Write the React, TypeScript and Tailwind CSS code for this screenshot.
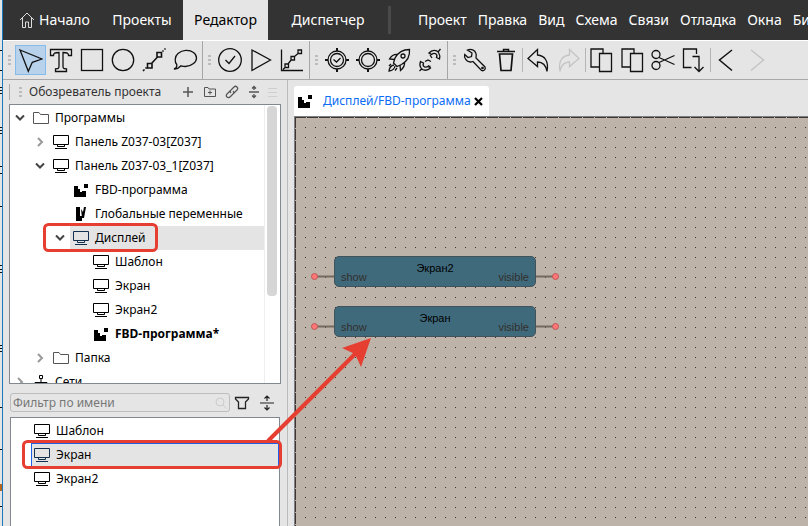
import type { ReactNode } from "react";

type IconName = "folder" | "display" | "fbd" | "vars" | "net";

interface TreeNode {
  id: string;
  label: string;
  icon: IconName;
  level: number;
  state?: "open" | "closed";
  selected?: boolean;
  bold?: boolean;
}

const treeNodes: TreeNode[] = [
  { id: "programs", label: "Программы", icon: "folder", level: 0, state: "open" },
  { id: "panel-03", label: "Панель Z037-03[Z037]", icon: "display", level: 1, state: "closed" },
  { id: "panel-03-1", label: "Панель Z037-03_1[Z037]", icon: "display", level: 1, state: "open" },
  { id: "fbd", label: "FBD-программа", icon: "fbd", level: 2 },
  { id: "globals", label: "Глобальные переменные", icon: "vars", level: 2 },
  { id: "display", label: "Дисплей", icon: "display", level: 2, state: "open", selected: true },
  { id: "template", label: "Шаблон", icon: "display", level: 3 },
  { id: "screen", label: "Экран", icon: "display", level: 3 },
  { id: "screen2", label: "Экран2", icon: "display", level: 3 },
  { id: "fbd-edited", label: "FBD-программа*", icon: "fbd", level: 3, bold: true },
  { id: "folder", label: "Папка", icon: "folder", level: 1, state: "closed" },
  { id: "nets", label: "Сети", icon: "net", level: 0, state: "closed" },
];

const indents = ["pl-0", "pl-5", "pl-10", "pl-15"];

const menuItems = ["Проект", "Правка", "Вид", "Схема", "Связи", "Отладка", "Окна", "Библиотека"];

const blocks = [
  { id: "b2", label: "Экран2", place: "left-[15px] top-[139px]" },
  { id: "b1", label: "Экран", place: "left-[15px] top-[189px]" },
];

function ItemIcon({ name, active }: { name: IconName; active?: boolean }) {
  const color = active ? "text-[#14304f]" : "text-black";
  return (
    <svg className={`h-4 w-4 shrink-0 ${color}`} viewBox="0 0 16 16" fill="none" stroke="currentColor">
      {name === "folder" && <path stroke="#555" d="M.5 13.5V2.5H6l1.5 2h8v9z" />}
      {name === "display" && <path d="M.5 1.500h15v9h-15zM4.500 10.500v2h7v-2M2 14.500h12" />}
      {name === "fbd" && (
        <path stroke="none" fill="currentColor" d="M1 4h4v3h2v3h2V9h4v6H1zM11 2h4v4h-4z" />
      )}
      {name === "vars" && (
        <path stroke="none" fill="currentColor" d="M3 1h4v9h2v5H3zM8 3l2 3 1-5h2l-2 11H9z" />
      )}
      {name === "net" && (
        <path d="M8 4v6M2 14V8.500h12V14M8 10v5M6.500 1.500h3v3h-3z" />
      )}
    </svg>
  );
}

function Chevron({ state }: { state?: "open" | "closed" }) {
  return (
    <svg className="h-3 w-3 shrink-0" viewBox="0 0 12 12" fill="none" strokeWidth="2">
      {state === "open" && <path stroke="#444" d="M2 3.500l4 4 4-4" />}
      {state === "closed" && <path stroke="#999" d="M4 2l4 4-4 4" />}
    </svg>
  );
}

function Grip() {
  return (
    <svg className="h-[10px] w-3 shrink-0" viewBox="0 0 12 10" fill="#bcbcbc">
      <path d="M5 0h3v2H5zM5 4h3v2H5zM5 8h3v2H5z" />
    </svg>
  );
}

interface ToolProps {
  label: string;
  active?: boolean;
  disabled?: boolean;
  children: ReactNode;
}

function Tool({ label, active, disabled, children }: ToolProps) {
  return (
    <button
      type="button"
      aria-label={label}
      aria-pressed={active}
      disabled={disabled}
      className={`flex h-[30px] w-[31px] shrink-0 items-center justify-center border ${
        active ? "border-[#84bdec] bg-[#b7d2ea]" : "border-transparent"
      } ${disabled ? "text-[#c4c4c4]" : "text-[#111]"}`}
    >
      <svg
        className="h-[26px] w-[25px] shrink-0"
        viewBox="0 0 25 26"
        fill="none"
        stroke="currentColor"
        strokeWidth="1.300"
      >
        {children}
      </svg>
    </button>
  );
}

function ToolGroup({ children }: { children: ReactNode }) {
  return (
    <div className="flex shrink-0 items-center border-r border-[#a6a6a6] pr-px">
      <Grip />
      {children}
    </div>
  );
}

function Divider() {
  return <span className="h-6 w-px shrink-0 bg-[#b5b5b5]" />;
}

function Toolbar() {
  return (
    <div className="flex h-10 border-t border-b border-t-white border-b-[#a8a8a8]">
      <ToolGroup>
        <Tool label="Выбор" active>
          <path d="M2 3l22 9-9.700 3.300-4 9z" />
        </Tool>
        <Tool label="Текст">
          <path d="M1.500 8.500v-6h21v6h-3c0-2.500-1-3-5.500-3V19c0 2.500.5 2.500 3.500 2.800v2.700H6.500v-2.700C9.500 21.500 10 21.500 10 19V5.500c-4.500 0-5.500.5-5.500 3z" />
        </Tool>
        <Tool label="Прямоугольник">
          <rect x="1.500" y="2.500" width="21" height="21" />
        </Tool>
        <Tool label="Эллипс">
          <circle cx="12" cy="13" r="10.700" />
        </Tool>
        <Tool label="Связь">
          <path strokeWidth="1.600" d="M5.500 16.500H10V21H5.500zM15 5.500h4.500V10H15zM9.500 16.500L15.500 10M1 24l1.500-1.500M3.500 21.500l1-1M20.500 4.500l1-1M22.500 2.500L23.500 1.500" />
        </Tool>
        <Tool label="Комментарий">
          <path d="M1 22c2-.5 3-2 2.800-4.500C1.500 15 1.500 9.500 5 6.500c4.500-4 11.500-4 15.500-1 4 3 4 8 0 11-3.500 2.800-8.500 3.500-12.500 2.300C6 21 3.500 22.300 1 22z" />
        </Tool>
      </ToolGroup>
      <ToolGroup>
        <Tool label="Проверить">
          <circle cx="12" cy="13" r="11.300" />
          <path d="M7.500 13l3.500 3.500 6-7.500" />
        </Tool>
        <Tool label="Запуск">
          <path d="M3 3v20.500L21.500 13z" />
        </Tool>
        <Tool label="График">
          <path d="M1.500 2.500v21h21.500M3 22.500l2.500-2.500M8 17l3.500-4.500M14.500 9.500l3.500-3M5 17h3.500v3.500H5zM11 9.500h3.500V13H11zM18 3h3.500v3.500H18z" />
        </Tool>
      </ToolGroup>
      <ToolGroup>
        <Tool label="Подключить и проверить">
          <circle cx="12" cy="13" r="9" />
          <circle cx="12" cy="13" r="6.500" />
          <path d="M8.500 12.500l3 2.500 4-4" />
          <path strokeWidth="2" d="M12 1v3M12 22v3M0 13h3M21 13h3" />
        </Tool>
        <Tool label="Подключить">
          <circle cx="12" cy="13" r="9" />
          <circle cx="12" cy="13" r="6.500" />
          <path strokeWidth="2" d="M12 1v3M12 22v3M0 13h3M21 13h3" />
        </Tool>
        <Tool label="Загрузить">
          <path d="M22.500 2.500C16 2.500 11 5.500 8 11l-1.500 5 3.500 3.500 4.500-2C20 14.500 23 9 22.500 2.500zM11 7.500c-4-.5-6.500 1-8.500 4.500l5 .5M17.500 15c.5 3.500-1 6-4 8.500l-.5-5.500M7 18c-3 .5-4.500 2-5 6 3.500-.5 5.500-2 6-5M4 17l-2 2M10 21l-2 2.500" />
          <circle cx="16" cy="9" r="2" />
        </Tool>
        <Tool label="Обновить связь">
          <path d="M2.500 14.500l3 1.500c-1.500 3.500 2 5.500 5 3l2 2c-3 3-7.500 3-9.500 0-1.300-2-1.300-4.500-.5-6.500zM4 21.500L1.500 24M10 20l2.500-1M21.500 12l-3-1.500c1.500-3.500-2-5.500-5-3l-2.500-1.500c3-3.500 7.500-3.500 9.500-.5 1.300 2 1.500 4.500 1 6.500zM20 5l2.500-3M12 8l2 3M7 14.500l3-1.500 3 1.500" />
        </Tool>
      </ToolGroup>
      <div className="flex shrink-0 items-center">
        <Grip />
        <Tool label="Настройки">
          <path d="M4.500 3C8 1.500 12 3 13 6.500c.5 1.500 0 3 0 4.500l9 9c1 2-1 4.500-3.500 3.500L10 14.500c-3 1-6 0-7.500-2.500-1-1.500-1.200-3-.8-4.500L5 10.500l3.500-1L9 6z" />
          <circle cx="19.500" cy="21" r=".7" />
        </Tool>
        <Tool label="Удалить">
          <path strokeWidth="1.500" d="M3 4.500h18M9.500 4V2.500h5V4" />
          <path strokeWidth="1.700" d="M5.500 7l1.500 16.500h10L18.500 7z" />
        </Tool>
        <Divider />
        <Tool label="Отменить">
          <path d="M11.500 2.500L2 11.500l9.500 8V15c5 0 8.500 3.500 9.500 9.500C23 14 18.500 8.500 11.500 8z" />
        </Tool>
        <Tool label="Повторить" disabled>
          <path d="M12.500 2.500l9.500 9-9.500 8V15c-5 0-8.500 3.500-9.500 9.500C1 14 5.500 8.500 12.500 8z" />
        </Tool>
        <Divider />
        <Tool label="Копировать">
          <path d="M10 20H2V2h12v4M10.500 6.500h12v18h-12z" />
        </Tool>
        <Tool label="Дублировать">
          <path d="M10 20H2V2h12v4M10.500 6.500h12v18h-12z" />
        </Tool>
        <Tool label="Вырезать">
          <circle cx="5" cy="7.500" r="4" />
          <circle cx="5" cy="18.500" r="4" />
          <path d="M8 10.500l15.500 7M8 15.500l15.500-7" />
        </Tool>
        <Tool label="Вставить">
          <path d="M14.500 7V2h-13v18.500h8M10.500 9.500H17V24M12.500 20l4.500 4.500 4.500-4.500" />
        </Tool>
        <Divider />
        <Tool label="Назад">
          <path strokeWidth="1.500" d="M18 3L5.500 13 18 23.500" />
        </Tool>
        <Tool label="Вперёд" disabled>
          <path strokeWidth="1.500" d="M6 3l12.500 10L6 23.500" />
        </Tool>
      </div>
    </div>
  );
}

function Header() {
  return (
    <header className="flex h-10 items-stretch overflow-hidden bg-[#333] text-sm whitespace-nowrap text-white">
      <button type="button" className="flex w-[98px] shrink-0 items-center gap-1 pl-4">
        <svg className="h-4 w-4" viewBox="0 0 16 16" fill="none" stroke="#ddd">
          <path d="M1 8l7-7 7 7M3.500 6v9.500H6.500V10h3v5.500h3V6" />
        </svg>
        Начало
      </button>
      <button type="button" className="w-[82px] shrink-0">Проекты</button>
      <button type="button" className="w-[85px] shrink-0 bg-[#e5e5e5] text-black">Редактор</button>
      <button type="button" className="w-[120px] shrink-0">Диспетчер</button>
      <span className="my-1.5 w-[3px] shrink-0 bg-[#4a4a4a]" />
      <nav className="flex items-center gap-[11px] pl-[27px]">
        {menuItems.map((item) => (
          <button key={item} type="button" className="shrink-0">
            {item}
          </button>
        ))}
      </nav>
    </header>
  );
}

function ProjectTree() {
  return (
    <div className="mx-[6px] flex h-[280px] shrink-0 overflow-hidden border border-[#828790] bg-white">
      <ul role="tree" aria-label="Обозреватель проекта" className="min-w-0 flex-1 pt-px text-xs text-black">
        {treeNodes.map((node) => (
          <li key={node.id} role="treeitem" aria-selected={!!node.selected} className={`flex h-6 items-stretch ${indents[node.level]}`}>
            <span className="flex w-[20px] shrink-0 items-center pl-1">
              <Chevron state={node.state} />
            </span>
            <span
              className={`flex flex-1 items-center gap-[6px] pl-[3px] whitespace-nowrap ${
                node.selected ? "bg-[#e4e4e4]" : ""
              } ${node.bold ? "font-bold" : ""}`}
            >
              <ItemIcon name={node.icon} active={node.selected} />
              {node.label}
            </span>
          </li>
        ))}
      </ul>
      <div className="w-4 shrink-0 border-l border-[#eee] pt-px pl-[2px]">
        <div className="h-[190px] w-[10px] rounded-[4px] bg-[#d6d6d6]" />
      </div>
    </div>
  );
}

function FilterBar() {
  return (
    <div className="flex h-[33px] shrink-0 items-center pt-1 pl-[7px]">
      <label className="flex h-[19px] w-[220px] items-center rounded-[3px] border border-[#bdbdbd] px-[2px]">
        <input
          type="text"
          aria-label="Фильтр по имени"
          placeholder="Фильтр по имени"
          className="min-w-0 flex-1 bg-transparent text-xs outline-none placeholder:text-[#777]"
        />
        <svg className="h-3 w-3" viewBox="0 0 12 12" fill="none" stroke="#ccc">
          <path d="M9 5a4 4 0 1 1-8 0 4 4 0 0 1 8 0M8 8l3.500 3.500" />
        </svg>
      </label>
      <button type="button" aria-label="Фильтр" className="ml-1">
        <svg className="h-4 w-4" viewBox="0 0 16 16" fill="none" stroke="#222" strokeWidth="1.300">
          <path d="M1.500 2.500h13v1.500L11.500 7v6.500h-7V7l-3-3z" />
        </svg>
      </button>
      <button type="button" aria-label="Свернуть все" className="ml-[9px]">
        <svg className="h-4 w-4" viewBox="0 0 16 16" fill="none" stroke="#222" strokeWidth="1.200">
          <path d="M1 8h14M8 1v5M5.500 3.500L8 1l2.500 2.500M8 10v5M5.500 12.500L8 15l2.500-2.500" />
        </svg>
      </button>
    </div>
  );
}

function ItemList() {
  const items = ["Шаблон", "Экран", "Экран2"];
  return (
    <ul role="listbox" aria-label="Элементы" className="mx-[7px] min-h-0 flex-1 border border-b-0 border-[#828790] bg-white pt-px pl-[20px] text-xs text-black">
      {items.map((item) => {
        const selected = item === "Экран";
        return (
          <li
            key={item}
            role="option"
            aria-selected={selected}
            className={`flex h-6 items-center gap-[6px] border pl-[2px] ${
              selected ? "border-[#1f5fe8] bg-[#e4e4e4]" : "border-transparent"
            }`}
          >
            <ItemIcon name="display" active={selected} />
            {item}
          </li>
        );
      })}
    </ul>
  );
}

function Explorer() {
  return (
    <aside className="flex w-[285px] shrink-0 flex-col border-r border-[#bbb]">
      <div className="flex h-6 shrink-0 items-center pl-[6px] text-xs text-[#333]">
        <span className="h-4 w-px bg-[#aaa]" />
        <span className="ml-1 flex">
          <Grip />
        </span>
        <h2 className="ml-[3px] w-[152px] whitespace-nowrap">Обозреватель проекта</h2>
        <div className="flex gap-2 text-[#555]">
          <button type="button" aria-label="Добавить">
            <svg className="h-[14px] w-[14px]" viewBox="0 0 14 14" stroke="currentColor" strokeWidth="1.500">
              <path d="M7 2v10M2 7h10" />
            </svg>
          </button>
          <button type="button" aria-label="Новая папка">
            <svg className="h-[14px] w-[14px]" viewBox="0 0 14 14" fill="none" stroke="currentColor">
              <path d="M1.500 11.500v-9H5l1 1.500h6.500v7.500zM7 5.500v4M5 7.500h4" />
            </svg>
          </button>
          <button type="button" aria-label="Связать">
            <svg className="h-[14px] w-[14px]" viewBox="0 0 14 14" fill="none" stroke="currentColor" strokeWidth="1.200">
              <path d="M5.500 5.500l-3.500 3.500a2 2 0 0 0 3 3L8 9a2 2 0 0 0 0-3M8.500 8.500L12 5a2 2 0 0 0-3-3L6 5a2 2 0 0 0 0 3" />
            </svg>
          </button>
          <button type="button" aria-label="Свернуть">
            <svg className="h-[14px] w-[14px]" viewBox="0 0 14 14" fill="none" stroke="currentColor" strokeWidth="1.300">
              <path d="M2 7h10M7 1v4M5 3.500L7 1.500l2 2M7 9v4M5 10.500l2 2 2-2" />
            </svg>
          </button>
          <button type="button" aria-label="Меню" className="-ml-1">
            <svg className="h-[14px] w-[14px]" viewBox="0 0 14 14" stroke="#cfcfcf">
              <path d="M3 3.500h9M3 7.500h9M3 11.500h9" />
            </svg>
          </button>
        </div>
      </div>
      <ProjectTree />
      <FilterBar />
      <ItemList />
    </aside>
  );
}

function Block({ label, place }: { label: string; place: string }) {
  return (
    <div className={`absolute flex h-[31px] items-center ${place}`}>
      <svg className="mt-[10px] h-[9px] w-6" viewBox="0 0 24 9" fill="#f77">
        <path d="M7 4.500h17" stroke="#75685e" strokeWidth="2" />
        <circle cx="4.500" cy="4.500" r="3" stroke="#b55" />
      </svg>
      <div className="flex h-[31px] w-[202px] flex-col rounded-[5px] border border-[#42535b] bg-[#3f6a7c] px-[6px] pt-[5px] text-[11px] leading-[13px]">
        <div className="text-center text-black">{label}</div>
        <div className="-mt-1 flex justify-between text-[#332f2c]">
          <span>show</span>
          <span>visible</span>
        </div>
      </div>
      <svg className="mt-[10px] h-[9px] w-6" viewBox="0 0 24 9" fill="#f77">
        <path d="M0 4.500h17" stroke="#75685e" strokeWidth="2" />
        <circle cx="19.500" cy="4.500" r="3" stroke="#b55" />
      </svg>
    </div>
  );
}

function Editor() {
  return (
    <main className="flex min-w-0 flex-1 flex-col pl-[6px]">
      <div className="flex h-9 shrink-0 items-end">
        <div className="flex h-[30px] items-center rounded-t-[3px] bg-white pl-[3px] text-xs text-[#0a6cf5]">
          <ItemIcon name="fbd" />
          <a href="#program" className="ml-[10px] w-[141px] whitespace-nowrap">Дисплей/FBD-программа</a>
          <button type="button" aria-label="Закрыть" className="ml-[9px] pr-[5px]">
            <svg className="h-[11px] w-[11px]" viewBox="0 0 11 11" stroke="#000" strokeWidth="2.200">
              <path d="M2 2l7 7M9 2l-7 7" />
            </svg>
          </button>
        </div>
      </div>
      <div className="relative min-h-0 flex-1 overflow-hidden border-t border-l border-[#7b7f88] bg-[#bdb3a8] font-['Liberation_Sans',sans-serif]">
        <svg className="absolute h-full w-full" shapeRendering="crispEdges">
          <defs>
            <pattern id="grid" width="10" height="10" patternUnits="userSpaceOnUse">
              <rect width="1" height="1" fill="#3d302b" />
            </pattern>
          </defs>
          <rect x="10" y="10" width="100%" height="100%" fill="url(#grid)" />
          <line x1="0" y1="0.500" x2="100%" y2="0.500" stroke="#44342f" strokeDasharray="11 1" />
          <line x1="0.500" y1="0" x2="0.500" y2="100%" stroke="#44342f" strokeDasharray="11 1" />
        </svg>
        {blocks.map((block) => (
          <Block key={block.id} label={block.label} place={block.place} />
        ))}
      </div>
    </main>
  );
}

// Red callouts that tie the list item to its block on the canvas
function Callouts() {
  return (
    <svg className="pointer-events-none absolute top-0 left-0 h-[526px] w-[400px]" fill="none" stroke="#e63e31" strokeWidth="3">
      <rect x="44.500" y="224.500" width="112" height="26" rx="4" />
      <rect x="23.500" y="441.500" width="257" height="26" rx="4" />
      <path strokeWidth="4" d="M268 441l88-88" />
      <path stroke="none" fill="#e63e31" d="M371 338l-29 10 13 6 6 13z" />
    </svg>
  );
}

// Sliver of the window lying behind the application
function BackWindow() {
  const lines = [50, 70, 87, 90, 93, 127, 130, 133, 166, 173, 206, 265, 269, 272, 345, 348, 351, 407, 449, 506];
  return (
    <svg className="h-full w-[2px] shrink-0" fill="#111" shapeRendering="crispEdges">
      {lines.map((y) => (
        <rect key={y} y={y} width="2" height="1" />
      ))}
      <rect y="484" width="2" height="7" fill="#b5651d" />
    </svg>
  );
}

export default function App() {
  return (
    <div className="relative flex h-screen overflow-hidden bg-[#e5e5e5] font-['Noto_Sans','Open_Sans',sans-serif]">
      <BackWindow />
      <div className="flex min-w-0 flex-1 flex-col border-l border-[#1979c0]">
        <Header />
        <Toolbar />
        <div className="flex min-h-0 flex-1">
          <Explorer />
          <Editor />
        </div>
      </div>
      <Callouts />
    </div>
  );
}
